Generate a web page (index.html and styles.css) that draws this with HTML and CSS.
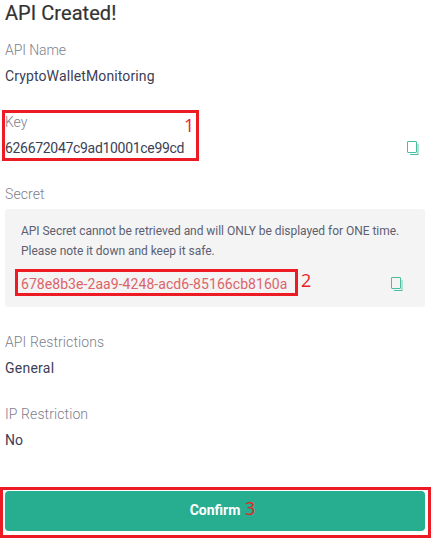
FILE: index.html
```html
<!DOCTYPE html>
<html lang="en">
<head>
<meta charset="utf-8">
<title>API Created</title>
<link rel="stylesheet" href="styles.css">
</head>
<body>
<main class="dialog">
  <h1 class="title">API Created!</h1>
  <section class="field">
    <div class="label">API Name</div>
    <div class="value"><span class="t-wallet">CryptoWalletMonitoring</span></div>
  </section>
  <section class="field">
    <div class="label">Key</div>
    <div class="value row"><span class="t-key">626672047c9ad10001ce99cd</span>
      <svg class="copy" viewBox="0 0 12 14"><path class="soft" d="M11 3v10"/><rect x=".5" y=".5" width="9" height="11" rx=".5"/><path d="M3 13.5h8.5" /></svg>
    </div>
    <div class="mark mark-key"><span class="num">1</span></div>
  </section>
  <section class="secret">
    <div class="label t-secret">Secret</div>
    <div class="panel">
      <p class="note">API Secret cannot be retrieved and will ONLY be displayed for ONE time.<br>Please note it down and keep it safe.</p>
      <div class="row secret-row"><span class="t-code">678e8b3e-2aa9-4248-acd6-85166cb8160a</span>
        <svg class="copy" viewBox="0 0 12 14"><path class="soft" d="M11 3v10"/><rect x=".5" y=".5" width="9" height="11" rx=".5"/><path d="M3 13.5h8.5" /></svg>
      </div>
      <div class="mark mark-secret"><span class="num">2</span></div>
    </div>
  </section>
  <section class="field">
    <div class="label t-rest">API Restrictions</div>
    <div class="value t-general">General</div>
  </section>
  <section class="field">
    <div class="label t-rest">IP Restriction</div>
    <div class="value">No</div>
  </section>
  <div class="action">
    <button class="confirm">Confirm</button>
    <div class="mark mark-confirm"><span class="num">3</span></div>
  </div>
</main>
</body>
</html>
```
FILE: styles.css
```css
* { box-sizing: border-box; }
body { margin: 0; min-height: 548px; background: #fff; font-family: Roboto, "Liberation Sans", sans-serif; font-size: 14px; }
.dialog { width: 420px; height: 548px; margin-left: 5px; }
.title { margin: 0 0 11px; height: 26px; line-height: 27px; font-size: 20px; font-weight: 400; color: #333; letter-spacing: .05px; -webkit-text-stroke: .2px #333; }
.field { position: relative; margin-bottom: 20px; }
.label, .value { height: 26px; line-height: 26px; white-space: nowrap; }
.label { color: #7c808d; font-weight: 300; letter-spacing: -.08px; }
.value { color: #3c4056; }
.t-wallet { letter-spacing: .12px; }
.t-key { letter-spacing: -.31px; }
.t-secret { letter-spacing: .08px; }
.t-rest { letter-spacing: .1px; }
.t-general { letter-spacing: .25px; }
.t-code { letter-spacing: .06px; }
.row { display: flex; align-items: center; justify-content: space-between; }
.copy { width: 12px; height: 14px; margin-right: 6px; fill: none; stroke: #4abda0; stroke-width: 1; }
.copy .soft { stroke: #b4e2d6; stroke-width: 2; }
.panel { position: relative; margin: 2px 0 22px; height: 98px; padding: 12px 16px; background: #f4f4f4; border-radius: 3px; }
.note { margin: 0 0 10px; font-size: 12px; line-height: 20px; letter-spacing: -.04px; color: #5c6072; white-space: nowrap; }
.secret-row { height: 26px; line-height: 26px; color: #dc6468; }
.action { position: relative; padding-top: 18px; }
.confirm { display: block; width: 420px; height: 40px; padding: 0 0 2px; border: 0; border-radius: 4px; background: #27ae91; color: #fff; font: 700 14px Roboto, sans-serif; }
.mark { position: absolute; border: 3px solid #ed1c24; pointer-events: none; }
.mark-key { left: -3px; top: 1px; width: 197px; height: 51px; }
.mark-secret { left: 10px; top: 60px; width: 283px; height: 27px; }
.mark-confirm { left: -5px; top: 14px; width: 431px; height: 51px; }
.num { position: absolute; font: 18px/20px "Open Sans", sans-serif; color: #ed1c24; }
.mark-key .num { left: 179px; top: 2px; }
.mark-secret .num { left: 283px; top: -2px; }
.mark-confirm .num { left: 242px; top: 8px; }
```
